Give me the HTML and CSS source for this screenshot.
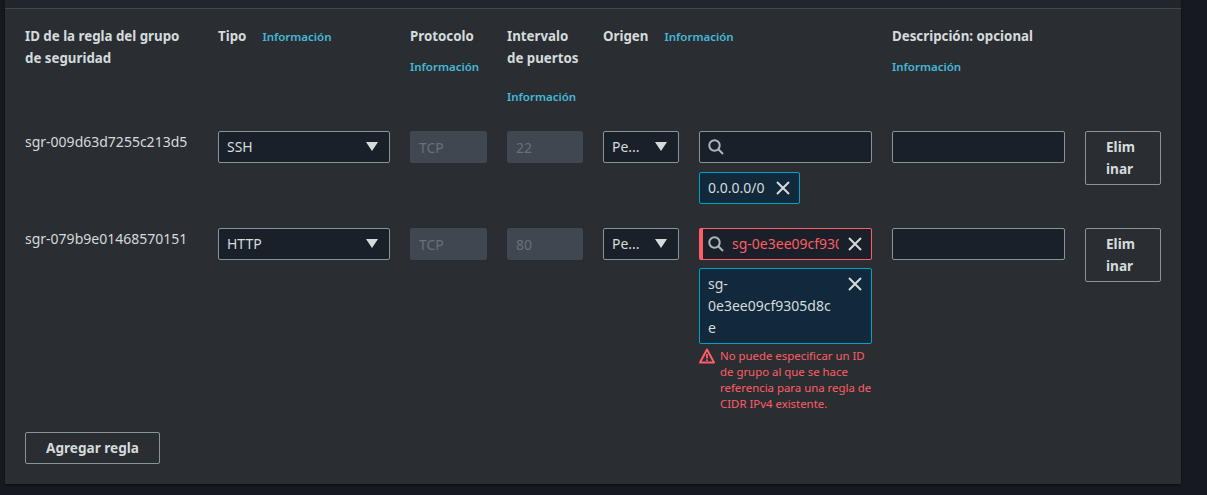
FILE: index.html
```html
<!DOCTYPE html>
<html lang="es">
<head>
  <meta charset="UTF-8" />
  <meta name="viewport" content="width=device-width, initial-scale=1.0" />
  <title>Reglas de entrada</title>
  <link rel="stylesheet" href="styles.css">
</head>
<body>
  <svg class="icon-defs" width="0" height="0" aria-hidden="true">
    <symbol id="i-search" viewBox="0 0 16 16">
      <circle cx="6.5" cy="6.5" r="5.2" fill="none" stroke="currentColor" stroke-width="2" />
      <path d="M10.3 10.3 15 15" fill="none" stroke="currentColor" stroke-width="2" />
    </symbol>
    <symbol id="i-close" viewBox="0 0 16 16">
      <path d="M2 2 14 14M14 2 2 14" fill="none" stroke="currentColor" stroke-width="2" />
    </symbol>
    <symbol id="i-warn" viewBox="0 0 16 16">
      <path d="M8 1.5 15 14.5H1Z" fill="none" stroke="currentColor" stroke-width="2" stroke-linejoin="round" />
      <path d="M8 6v4.5M8 11.5v1.6" fill="none" stroke="currentColor" stroke-width="1.8" />
    </symbol>
  </svg>

  <main class="panel">
    <div class="panel-top"></div>
    <form class="panel-body">
      <div class="rules">
        <div class="head head-id"><span class="head-label">ID de la regla del grupo de seguridad</span></div>
        <div class="head"><span class="head-label">Tipo</span><a class="info info-side" href="#">Información</a></div>
        <div class="head"><span class="head-label">Protocolo</span><a class="info info-below" href="#">Información</a></div>
        <div class="head"><span class="head-label">Intervalo de puertos</span><a class="info info-below info-far" href="#">Información</a></div>
        <div class="head"><span class="head-label">Origen</span><a class="info info-side" href="#">Información</a></div>
        <div class="head"></div>
        <div class="head"><span class="head-label">Descripción: opcional</span><a class="info info-below" href="#">Información</a></div>
        <div class="head"></div>

        <div class="rule-id">sgr-009d63d7255c213d5</div>
        <div class="select"><span>SSH</span><i class="caret"></i></div>
        <input class="field" type="text" value="TCP" disabled />
        <input class="field" type="text" value="22" disabled />
        <div class="select"><span>Pe...</span><i class="caret"></i></div>
        <div class="source">
          <div class="search">
            <svg class="search-icon"><use href="#i-search" /></svg>
            <input type="text" />
          </div>
          <div class="token">
            <span class="token-text">0.0.0.0/0</span>
            <svg class="close"><use href="#i-close" /></svg>
          </div>
        </div>
        <input class="field" type="text" />
        <button class="btn btn-small" type="button">Elim inar</button>

        <div class="rule-id">sgr-079b9e01468570151</div>
        <div class="select"><span>HTTP</span><i class="caret"></i></div>
        <input class="field" type="text" value="TCP" disabled />
        <input class="field" type="text" value="80" disabled />
        <div class="select"><span>Pe...</span><i class="caret"></i></div>
        <div class="source">
          <div class="search search-error">
            <svg class="search-icon"><use href="#i-search" /></svg>
            <input type="text" value="sg-0e3ee09cf9305d8ce" />
            <svg class="close"><use href="#i-close" /></svg>
          </div>
          <div class="token token-long">
            <span class="token-text">sg-0e3ee09cf9305d8ce</span>
            <svg class="close"><use href="#i-close" /></svg>
          </div>
          <div class="error">
            <svg class="error-icon"><use href="#i-warn" /></svg>
            <span>No puede especificar un ID de grupo al que se hace referencia para una regla de CIDR IPv4 existente.</span>
          </div>
        </div>
        <input class="field" type="text" />
        <button class="btn btn-small" type="button">Elim inar</button>
      </div>

      <button class="btn btn-add" type="button">Agregar regla</button>
    </form>
  </main>
</body>
</html>
```

FILE: styles.css
```css
html, body {
  height: 100%;
}
body {
  margin: 0;
  overflow: hidden;
  background-color: #16191f;
  color: #d5dbdb;
  font-family: "Noto Sans", Arial, sans-serif;
  font-size: 14px;
  line-height: 22px;
}
.icon-defs {
  position: absolute;
}
.panel {
  width: 1176px;
  height: 484px;
  margin-left: 5px;
  display: flex;
  flex-direction: column;
  background-color: #2a2e33;
  box-shadow: 0 1px 2px rgba(0, 0, 0, 0.5);
}
.panel-top {
  height: 8px;
  flex: none;
  background-color: #21252c;
  border-bottom: 1px solid #414750;
}
.panel-body {
  padding: 16px 20px 20px;
}
.rules {
  display: grid;
  grid-template-columns: 173px 172px 77px 76px 76px 173px 173px 76px;
  grid-template-rows: 82px auto auto;
  column-gap: 20px;
  row-gap: 24px;
  align-items: start;
}
.head-id {
  padding-right: 10px;
}
.head-label {
  font-weight: 700;
  font-size: 13.3px;
}
.info {
  color: #44b9d6;
  font-size: 11.5px;
  font-weight: 600;
  line-height: 16px;
  text-decoration: none;
}
.info-side {
  margin-left: 16px;
}
.info-below {
  display: block;
  margin-top: 12px;
}
.info-far {
  margin-top: 20px;
}
.rule-id {
  white-space: nowrap;
}
.select {
  height: 32px;
  box-sizing: border-box;
  padding: 0 11px 0 8px;
  display: flex;
  align-items: center;
  justify-content: space-between;
  background-color: #1a2029;
  border: 1px solid #879596;
  border-radius: 2px;
}
.caret {
  width: 0;
  height: 0;
  margin-bottom: 2px;
  border-left: 6px solid transparent;
  border-right: 6px solid transparent;
  border-top: 9px solid #d5dbdb;
}
.field {
  width: 100%;
  height: 32px;
  box-sizing: border-box;
  margin: 0;
  padding: 0 8px;
  background-color: #1a2029;
  border: 1px solid #879596;
  border-radius: 2px;
  color: #d5dbdb;
  font: inherit;
}
.field:disabled {
  background-color: #414750;
  border-color: #414750;
  color: #687078;
}
.search {
  height: 32px;
  box-sizing: border-box;
  padding: 0 8px;
  display: flex;
  align-items: center;
  gap: 8px;
  background-color: #1a2029;
  border: 1px solid #879596;
  border-radius: 2px;
}
.search input {
  flex: 1;
  min-width: 0;
  padding: 0;
  background: none;
  border: 0;
  outline: 0;
  color: #d5dbdb;
  font: inherit;
}
.search-icon {
  flex: none;
  width: 16px;
  height: 16px;
  color: #aab7b8;
}
.close {
  flex: none;
  width: 16px;
  height: 16px;
  color: #d5dbdb;
}
.search-error {
  padding-left: 5px;
  border-color: #ff5d64;
  border-left-width: 4px;
}
.search-error input {
  color: #ff5d64;
}
.token {
  width: fit-content;
  box-sizing: border-box;
  margin-top: 9px;
  padding: 4px 8px;
  display: flex;
  align-items: flex-start;
  gap: 10px;
  background-color: #12293b;
  border: 1px solid #00a1c9;
  border-radius: 2px;
}
.token .close {
  margin-top: 3px;
}
.token-long {
  width: 100%;
  justify-content: space-between;
  margin-top: 8px;
}
.token-long .token-text {
  width: 126px;
  overflow-wrap: anywhere;
}
.error {
  margin-top: 4px;
  display: flex;
  gap: 5px;
  color: #ff5d64;
  font-size: 11.4px;
  line-height: 16px;
}
.error-icon {
  flex: none;
  width: 16px;
  height: 16px;
}
.btn {
  box-sizing: border-box;
  background: none;
  border: 1px solid #879596;
  border-radius: 2px;
  color: #d5dbdb;
  font: inherit;
  font-weight: 700;
  font-size: 13.6px;
}
.btn-small {
  width: 76px;
  height: 54px;
  padding: 4px 20px;
  text-align: left;
  overflow-wrap: anywhere;
}
.btn-add {
  display: block;
  width: 135px;
  height: 32px;
  margin-top: 20px;
}
```
